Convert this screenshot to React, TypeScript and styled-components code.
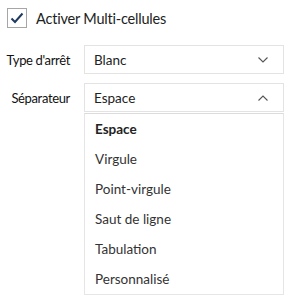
import styled, { createGlobalStyle } from "styled-components";

const GlobalStyle = createGlobalStyle`
  body {
    margin: 0;
    background: #ffffff;
    font-family: "Lato", "Noto Sans", sans-serif;
    color: #1a1a1a;
  }
`;

const Page = styled.div`
  width: 295px;
  height: 306px;
  padding: 8px 0 0 7px;
  box-sizing: border-box;
`;

const CheckRow = styled.label`
  display: flex;
  align-items: center;
  gap: 9px;
  height: 20px;
  font-size: 14.5px;
  letter-spacing: -0.2px;
  color: #222;
`;

const CheckBox = styled.span`
  width: 20px;
  height: 20px;
  box-sizing: border-box;
  border: 1px solid #a6a6a6;
  background: #fff;
  display: flex;
  align-items: center;
  justify-content: center;
`;

const Form = styled.div`
  margin-top: 17px;
  display: grid;
  grid-template-columns: 63px 200px;
  column-gap: 14px;
  row-gap: 9px;
  align-items: start;
`;

const Label = styled.div`
  height: 29px;
  display: flex;
  align-items: center;
  justify-content: flex-end;
  font-size: 13px;
  letter-spacing: -0.35px;
  color: #111;
  white-space: nowrap;
`;

const Field = styled.div`
  display: flex;
  flex-direction: column;
`;

const Select = styled.div`
  height: 29px;
  box-sizing: border-box;
  border: 1px solid #e3e3e3;
  display: flex;
  align-items: center;
  justify-content: space-between;
  padding: 0 15px 0 9px;
  font-size: 13.5px;
  color: #222;
  background: #fff;
`;

const Menu = styled.ul`
  list-style: none;
  margin: 1px 0 0;
  padding: 0;
  border: 1px solid #e6e6e6;
  border-top: 1px solid #dcdcdc;
  background: #fff;
`;

const Item = styled.li<{ $active?: boolean }>`
  height: 30px;
  display: flex;
  align-items: center;
  padding-left: 10px;
  font-size: 13.5px;
  color: ${(p) => (p.$active ? "#222" : "#333")};
  font-weight: ${(p) => (p.$active ? 700 : 400)};
`;

const Chevron = ({ up }: { up?: boolean }) => (
  <svg width="10" height="6" viewBox="0 0 10 6">
    <path
      d={up ? "M0.5 5.5 L5 1 L9.5 5.5" : "M0.5 0.5 L5 5 L9.5 0.5"}
      fill="none"
      stroke="#555"
      strokeWidth="1.1"
    />
  </svg>
);

const options = [
  "Espace",
  "Virgule",
  "Point-virgule",
  "Saut de ligne",
  "Tabulation",
  "Personnalisé",
];

export default function App() {
  return (
    <Page>
      <GlobalStyle />
      <CheckRow>
        <CheckBox>
          <svg width="14" height="12" viewBox="0 0 14 12">
            <path
              d="M1.5 6.5 L5 10 L12.5 1.5"
              fill="none"
              stroke="#1f3a5f"
              strokeWidth="2"
            />
          </svg>
        </CheckBox>
        Activer Multi-cellules
      </CheckRow>
      <Form>
        <Label>Type d'arrêt</Label>
        <Field>
          <Select>
            Blanc
            <Chevron />
          </Select>
        </Field>
        <Label>Séparateur</Label>
        <Field>
          <Select>
            Espace
            <Chevron up />
          </Select>
          <Menu>
            {options.map((o, i) => (
              <Item key={o} $active={i === 0}>
                {o}
              </Item>
            ))}
          </Menu>
        </Field>
      </Form>
    </Page>
  );
}
